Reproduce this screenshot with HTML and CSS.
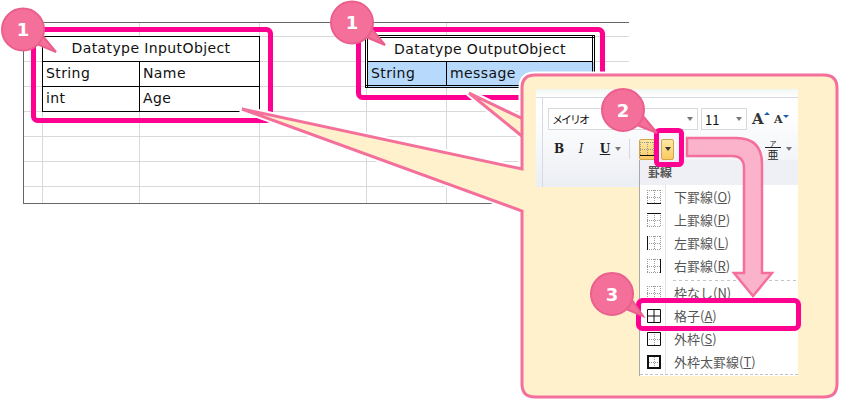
FILE: index.html
```html
<!DOCTYPE html>
<html lang="ja">
<head>
    <meta charset="UTF-8">
    <title>罫線の設定</title>
    <link rel="stylesheet" href="styles.css">
</head>
<body>
    <div class="canvas">
        <!-- sheet behind the tables -->
        <div class="sheet"></div>

        <table class="dt dt-input">
            <tr><th colspan="2">Datatype InputObject</th></tr>
            <tr><td class="col-a">String</td><td>Name</td></tr>
            <tr><td class="col-a">int</td><td>Age</td></tr>
        </table>

        <table class="dt dt-output">
            <tr><th colspan="2">Datatype OutputObject</th></tr>
            <tr class="selected"><td class="col-a">String</td><td>message</td></tr>
        </table>

        <svg class="layer" width="850" height="401">
            <rect class="hl" x="33.5" y="29.5" width="237" height="91" rx="4"/>
            <rect class="hl" x="358.5" y="29.5" width="244" height="68" rx="4"/>
            <path class="halo" d="M242 109 L522 169 V88 Q522 75 535 75 H824 Q837 75 837 88 V384 Q837 397 824 397 H535 Q522 397 522 384 V211 Z"/>
            <path class="halo" d="M469 93 L523 119 V137 Z"/>
            <path class="panel-tail" d="M469 93 L523 119 V137 Z"/>
            <path class="panel" d="M242 109 L522 169 V88 Q522 75 535 75 H824 Q837 75 837 88 V384 Q837 397 824 397 H535 Q522 397 522 384 V211 Z"/>
        </svg>

        <div class="ribbon">
            <div class="ribbon-top"></div>
            <div class="ribbon-row row-font">
                <div class="combo combo-font"><span>メイリオ</span><i class="caret"></i></div>
                <div class="combo combo-size"><span>11</span><i class="caret"></i></div>
                <span class="grow">A<i class="mini up"></i></span>
                <span class="shrink">A<i class="mini down"></i></span>
            </div>
            <div class="ribbon-row row-style">
                <span class="style-btn b">B</span>
                <span class="style-btn it">I</span>
                <span class="style-btn u">U</span>
                <i class="caret"></i>
                <span class="sep"></span>
                <span class="border-btn">
                    <svg width="14" height="14"><use href="#grid-dots"/><path d="M0 13.500H14" stroke="#111"/></svg>
                </span>
                <span class="border-drop"><i class="caret dark"></i></span>
                <span class="phonetic"><small>ア</small><b>亜</b></span>
                <i class="caret"></i>
            </div>
        </div>

        <div class="menu">
            <div class="menu-head">罫線</div>
            <ul class="menu-list">
                <li><svg width="14" height="14"><use href="#grid-dots"/><path d="M0 13.500H14" stroke="#111"/></svg><span>下罫線(<u>O</u>)</span></li>
                <li><svg width="14" height="14"><use href="#grid-dots"/><path d="M0 .5H14" stroke="#111"/></svg><span>上罫線(<u>P</u>)</span></li>
                <li><svg width="14" height="14"><use href="#grid-dots"/><path d="M.5 0V14" stroke="#111"/></svg><span>左罫線(<u>L</u>)</span></li>
                <li class="last-of-group"><svg width="14" height="14"><use href="#grid-dots"/><path d="M13.500 0V14" stroke="#111"/></svg><span>右罫線(<u>R</u>)</span></li>
                <li><svg width="14" height="14"><use href="#grid-dots"/></svg><span>枠なし(<u>N</u>)</span></li>
                <li><svg width="14" height="14"><path d="M.5 .5H13.500V13.500H.5ZM7 0V14M0 7H14" fill="none" stroke="#111"/></svg><span>格子(<u>A</u>)</span></li>
                <li><svg width="14" height="14"><use href="#grid-dots"/><path d="M.5 .5H13.500V13.500H.5Z" fill="none" stroke="#111"/></svg><span>外枠(<u>S</u>)</span></li>
                <li><svg width="14" height="14"><use href="#grid-dots"/><path d="M1 1H13V13H1Z" fill="none" stroke="#111" stroke-width="2"/></svg><span>外枠太罫線(<u>T</u>)</span></li>
            </ul>
        </div>

        <svg class="layer" width="850" height="401">
            <defs>
                <symbol id="grid-dots" viewBox="0 0 14 14">
                    <path d="M0 .5H14M0 7.500H14M0 13.500H14M.5 0V14M7.500 0V14M13.500 0V14" fill="none" stroke="#9a9a9a" stroke-dasharray="1 1"/>
                </symbol>
            </defs>
            <rect class="hl" x="656.500" y="130.500" width="25" height="34" rx="3"/>
            <rect class="hl" x="638.500" y="300.500" width="160" height="28" rx="4"/>
            <path class="arrow" d="M687 138 H736 Q762 138 762 164 V273 H772 L753 296 L734 273 H744 V168 Q744 156 732 156 H687 Z"/>

            <g class="badge">
                <path d="M37 44 L56 52 L42 35Z"/><circle cx="23" cy="29.500" r="21"/>
                <text x="23" y="36">1</text>
            </g>
            <g class="badge">
                <path d="M366 37 L385 45 L371 28Z"/><circle cx="352" cy="22.500" r="21"/>
                <text x="352" y="29">1</text>
            </g>
            <g class="badge">
                <path d="M637 125 L657 133 L643 116Z"/><circle cx="623" cy="110" r="21"/>
                <text x="623" y="116.500">2</text>
            </g>
            <g class="badge">
                <path d="M626 309 L643 316 L632 300Z"/><circle cx="612" cy="294" r="21"/>
                <text x="612" y="300.500">3</text>
            </g>
        </svg>
    </div>
</body>
</html>
```

FILE: styles.css
```css
body {
    margin: 0;
    background: #fff;
    font-family: "DejaVu Sans", sans-serif;
}
.canvas {
    position: relative;
    width: 850px;
    height: 401px;
    overflow: hidden;
}
.layer {
    position: absolute;
    top: 0;
    left: 0;
}

/* spreadsheet */
.sheet {
    position: absolute;
    left: 23px;
    top: 22px;
    width: 605px;
    height: 180px;
    border-top: 1px solid #666;
    border-left: 1px solid #666;
    border-bottom: 1px solid #666;
    background-image:
        linear-gradient(#d9d9d9, #d9d9d9),
        linear-gradient(#d9d9d9, #d9d9d9),
        linear-gradient(#d9d9d9, #d9d9d9),
        linear-gradient(#d9d9d9, #d9d9d9),
        linear-gradient(#d9d9d9, #d9d9d9),
        linear-gradient(to top, #d9d9d9 1px, transparent 1px);
    background-size: 1px 100%, 1px 100%, 1px 100%, 1px 100%, 1px 100%, 100% 25px;
    background-position: 18px 0, 115px 0, 235px 0, 342px 0, 422px 0, 0 14px;
    background-repeat: no-repeat, no-repeat, no-repeat, no-repeat, no-repeat, repeat-y;
}

.dt {
    position: absolute;
    border-collapse: collapse;
    background: #fff;
    font-size: 14px;
    letter-spacing: .4px;
    color: #111;
}
.dt th {
    font-weight: normal;
    text-align: center;
}
.dt th, .dt td {
    box-sizing: border-box;
    height: 25px;
    padding: 0 3px 2px 3px;
    border: 1px solid #000;
}
.dt-input {
    left: 42px;
    top: 36px;
    width: 218px;
}
.dt-input .col-a {
    width: 97px;
}
.dt-output {
    left: 365px;
    top: 35px;
    width: 230px;
    border: 3px double #000;
}
.dt-output .col-a {
    width: 80px;
}
.selected td {
    background: #b7d9fb;
}

/* annotation shapes */
.hl {
    fill: none;
    stroke: #ff0090;
    stroke-width: 5;
}
.halo {
    fill: none;
    stroke: #fff;
    stroke-width: 7;
    stroke-linejoin: round;
}
.panel, .panel-tail {
    fill: #fff1cc;
    stroke: #f4709b;
    stroke-width: 3;
}
.arrow {
    fill: #fab3cb;
    stroke: #f4709b;
    stroke-width: 2.5;
}
.badge path, .badge circle {
    fill: #f46f99;
    stroke: #ea5f8c;
    stroke-width: 2;
}
.badge text {
    fill: #fff;
    font-family: "DejaVu Sans", sans-serif;
    font-weight: bold;
    font-size: 18px;
    text-anchor: middle;
}

/* ribbon */
.ribbon {
    position: absolute;
    left: 536px;
    top: 89px;
    width: 262px;
    height: 98px;
    background: linear-gradient(#fff 25%, #ebeef4);
    box-sizing: border-box;
    padding-left: 12px;
    font-family: "Noto Sans CJK JP", sans-serif;
}
.ribbon::before {
    content: "";
    position: absolute;
    left: 6px;
    top: 8px;
    bottom: 0;
    width: 1px;
    background: #d6dbe2;
}
.ribbon-top {
    height: 8px;
    margin: 0 0 10px -12px;
    background: linear-gradient(#f0f7f5, #fff);
    border-bottom: 1px solid #d6dbe2;
}
.ribbon-row {
    display: flex;
    align-items: center;
}
.row-font {
    height: 22px;
}
.row-style {
    height: 22px;
    margin-top: 8px;
}
.combo {
    box-sizing: border-box;
    height: 22px;
    display: flex;
    align-items: center;
    justify-content: space-between;
    padding: 0 4px 0 3px;
    background: #fff;
    border: 1px solid #d6dadf;
    font-size: 12px;
    color: #111;
}
.combo-font {
    width: 150px;
    margin-right: 3px;
    font-size: 11px;
    letter-spacing: -2px;
}
.combo-size {
    width: 46px;
    font-size: 13px;
}
.caret {
    display: inline-block;
    width: 0;
    height: 0;
    border: 3px solid transparent;
    border-top: 4px solid #777;
    border-bottom: 0;
}
.caret.dark {
    border-top-color: #333;
}
.grow, .shrink {
    font-family: "DejaVu Serif", serif;
    font-weight: bold;
    color: #333;
    position: relative;
}
.grow {
    font-size: 15px;
    margin-left: 5px;
    width: 20px;
}
.shrink {
    font-size: 11px;
    margin-left: 2px;
    width: 18px;
}
.mini {
    position: absolute;
    top: 2px;
    width: 0;
    height: 0;
    border: 3px solid transparent;
}
.mini.up {
    border-bottom: 3px solid #1f5fa8;
    border-top: 0;
}
.mini.down {
    border-top: 3px solid #1f5fa8;
    border-bottom: 0;
}
.style-btn {
    width: 22px;
    text-align: center;
    font: bold 12px "DejaVu Serif", serif;
    color: #222;
}
.style-btn.it {
    font-style: italic;
    font-weight: normal;
}
.style-btn.u {
    margin-left: 2px;
    text-decoration: underline;
}
.row-style .caret {
    margin-left: -1px;
}
.sep {
    width: 1px;
    height: 20px;
    margin: 0 9px 0 8px;
    background: #d6dadf;
}
.border-btn, .border-drop {
    box-sizing: border-box;
    height: 21px;
    display: flex;
    align-items: center;
    justify-content: center;
    background: linear-gradient(#fde9a3, #fbc95f);
    border: 1px solid #d2a54e;
    border-radius: 2px;
}
.border-btn {
    width: 16px;
}
.border-drop {
    width: 13px;
    margin-left: 6px;
}
.border-drop .caret {
    margin: 0;
}
.phonetic {
    margin-left: 91px;
    width: 16px;
    color: #222;
    text-align: center;
}
.phonetic small {
    display: block;
    font-size: 7px;
    line-height: 8px;
}
.phonetic b {
    display: block;
    font-weight: normal;
    font-size: 11px;
    line-height: 12px;
    border-top: 1px solid #222;
}
.row-style .phonetic + .caret {
    margin-left: 5px;
}

/* borders dropdown */
.menu {
    position: absolute;
    left: 639px;
    top: 160px;
    width: 159px;
    height: 216px;
    box-sizing: border-box;
    background: #fff;
    border-left: 1px solid #a9a9a9;
    font-family: "Noto Sans CJK JP", sans-serif;
    font-size: 13px;
    color: #555;
}
.menu-head {
    height: 25px;
    line-height: 24px;
    padding-left: 8px;
    background: #eef0f5;
    font-weight: bold;
    font-size: 12px;
}
.menu-list {
    list-style: none;
    margin: 0;
    padding: 0;
    height: 190px;
    box-sizing: border-box;
    border-bottom: 1px dashed #c4c4c4;
    background: linear-gradient(#e2e4e7, #e2e4e7) 25px 0 / 1px 100% no-repeat;
}
.menu-list li {
    height: 23px;
    display: flex;
    align-items: center;
    gap: 13px;
    padding-left: 7px;
}
.menu-list svg {
    flex: none;
}
.menu-list .last-of-group {
    height: 27px;
    padding-bottom: 4px;
    box-sizing: border-box;
    background: repeating-linear-gradient(to right, #c4c4c4 0 3px, transparent 3px 6px) 33px 100% / 125px 1px no-repeat;
}
```
